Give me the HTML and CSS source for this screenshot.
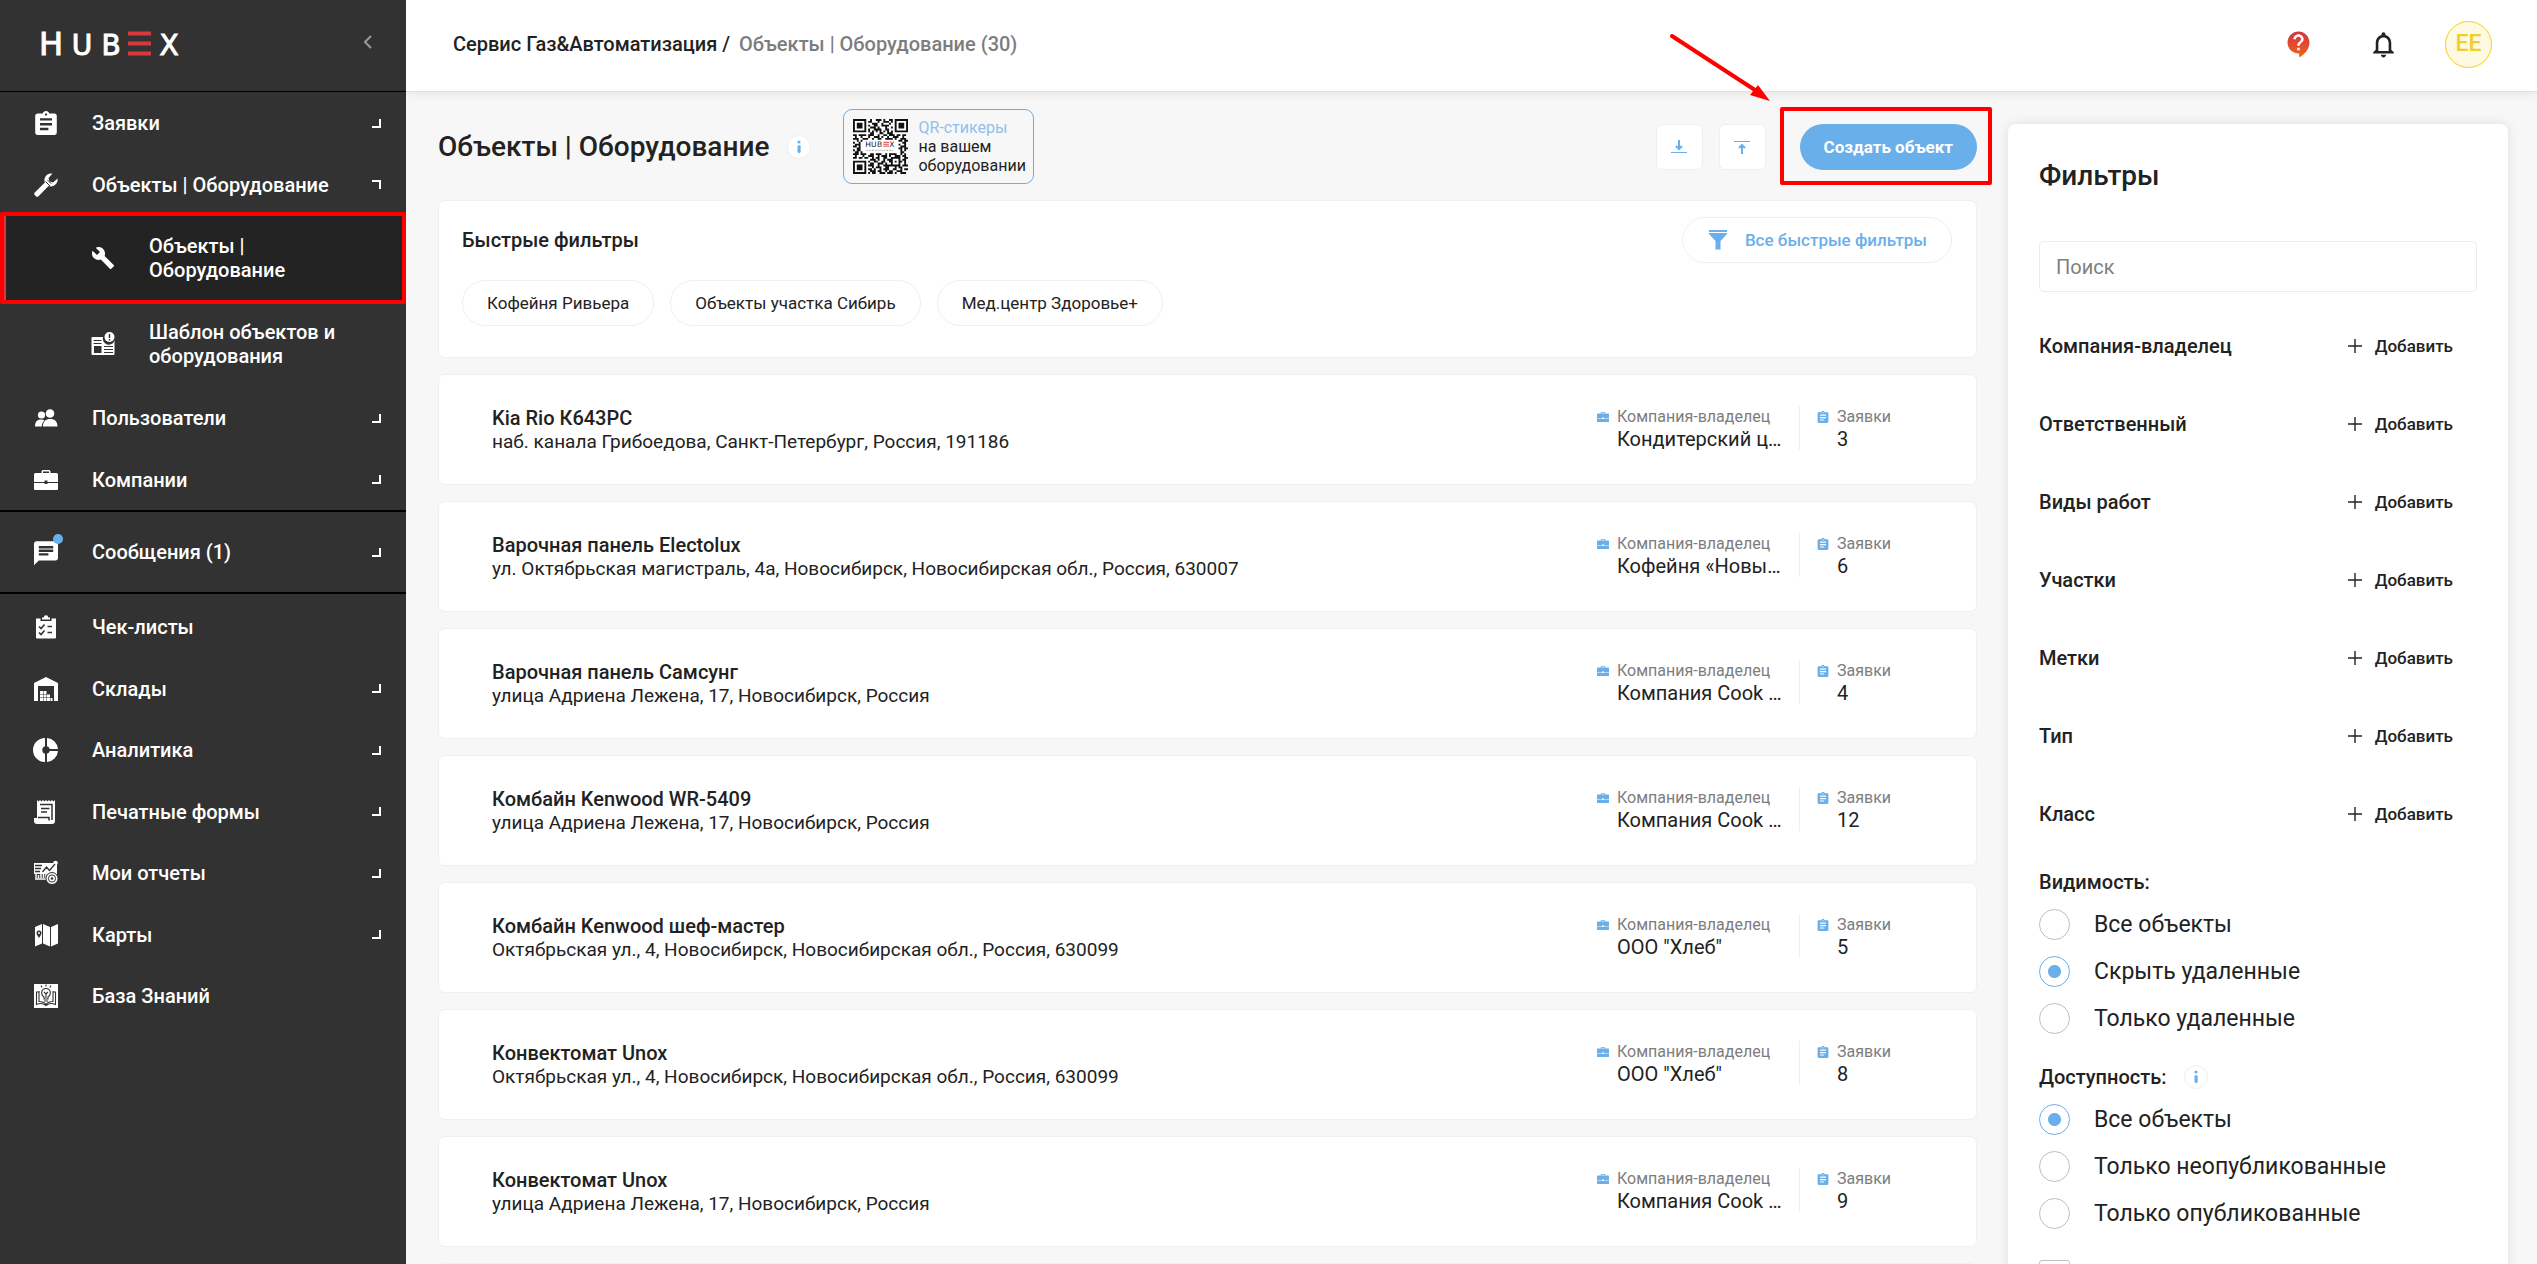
FILE: index.html
```html
<!DOCTYPE html>
<html lang="ru">
<head>
<meta charset="utf-8">
<meta name="viewport" content="width=device-width, initial-scale=1">
<title>HubEx — Объекты | Оборудование</title>
<link rel="stylesheet" href="styles.css">
</head>
<body>
<svg class="sprite" aria-hidden="true">
  <symbol id="i-clipboard" viewBox="2 1 20 20"><path d="M19 3h-4.180C14.400 1.840 13.300 1 12 1c-1.300 0-2.400.840-2.820 2H5c-1.100 0-2 .900-2 2v14c0 1.100.900 2 2 2h14c1.100 0 2-.900 2-2V5c0-1.100-.900-2-2-2zm-7 0c.550 0 1 .450 1 1s-.450 1-1 1-1-.450-1-1 .450-1 1-1zm2 14H7v-2h7v2zm3-4H7v-2h10v2zm0-4H7V7h10v2z"/></symbol>
  <symbol id="i-briefcase" viewBox="0 0 24 24"><path d="M7.500 5V3.500Q7.500 2 9 2h6q1.500 0 1.500 1.500V5H22.500Q24 5 24 6.500V14H13.500v-1.500h-3V14H0V6.500Q0 5 1.500 5zM9 5h6V3.500H9zM0 15h10.500v1h3v-1H24v6q0 1-1 1H1q-1 0-1-1z"/></symbol>
  <symbol id="i-wrench" viewBox="0 0 24 24"><path d="M22.700 19l-9.100-9.100c.900-2.300.400-5-1.500-6.900-2-2-5-2.400-7.400-1.300L9 6 6 9 1.600 4.700C.400 7.100.900 10.100 2.900 12.100c1.900 1.900 4.600 2.400 6.900 1.500l9.100 9.100c.400.400 1 .400 1.400 0l2.300-2.300c.500-.400.500-1.100.100-1.400z"/></symbol>
  <symbol id="i-info" viewBox="0 0 24 24"><circle cx="12" cy="6.500" r="1.700"/><rect x="10.400" y="10" width="3.400" height="8.500" rx="1.200"/></symbol>
  <symbol id="i-plus" viewBox="0 0 14 14"><path d="M7 0v14M0 7h14" fill="none" stroke="currentColor" stroke-width="1.400"/></symbol>
</svg>

<div class="app">
  <aside class="sidebar">
    <div class="brand">
      <svg class="logo" viewBox="0 -10 144 44" role="img" aria-label="HubEx">
        <g class="logo-text">
          <text x="14" y="25" font-size="32">H</text>
          <text x="45" y="25" font-size="28">U</text>
          <text x="74" y="25" font-size="28">B</text>
          <text x="132" y="25" font-size="28">X</text>
        </g>
        <path d="M91 3.500h23M91 13.500h23M91 23.500h23" stroke="#d8393f" stroke-width="4"/>
      </svg>
      <button class="collapse" type="button" aria-label="Свернуть меню">
        <svg width="10" height="14" viewBox="0 0 10 14"><path d="M8 1L2 7l6 6" fill="none" stroke="currentColor" stroke-width="2"/></svg>
      </button>
    </div>
    <nav>
      <ul class="menu">
        <li><a class="item" href="#"><svg class="icon"><use href="#i-clipboard"/></svg><span>Заявки</span><i class="corner"></i></a></li>
        <li>
          <a class="item" href="#">
            <svg class="icon" viewBox="0 0 24 24"><path d="M23.600 5.500l-4.600 4-3.500-1-1-3.500L18.500.600C15 0 11.500 2 10.600 5.500c-.300 1.500-.100 2.700.300 3.900L.800 19.500c-.800.800-.800 1.800 0 2.600l1.100 1.100c.800.800 1.800.800 2.600 0l10-10.100c5 1.800 9.800-2.500 9.100-7.600z"/><path d="M11.500 8.500l4.500 4.500M13.500 7l3.800 3.800" stroke="#323232" stroke-width="1" fill="none"/></svg>
            <span>Объекты | Оборудование</span><i class="corner corner-open"></i></a>
          <ul class="submenu">
            <li><a class="item item-active" href="#" aria-current="page"><svg class="icon"><use href="#i-wrench"/></svg><span>Объекты | Оборудование</span></a></li>
            <li><a class="item" href="#">
              <svg class="icon" viewBox="0 0 24 24"><path d="M1.500 5H12a6 6 0 0 0 11.500 3.500V22q0 1-1 1h-21q-1 0-1-1V6q0-1 1-1z"/><g stroke="#323232" stroke-width="1.200" fill="none"><path d="M2.500 8.500h8M2.500 11.500h8M13 14.500h9M13 17.500h9M13 20.500h9"/><rect x="3" y="14" width="7.500" height="7" stroke="none" fill="#323232"/></g><circle cx="18.500" cy="5" r="5"/><path d="M18.500 2v4M18.500 7v1.500" stroke="#323232" stroke-width="1.400"/></svg>
              <span>Шаблон объектов и оборудования</span></a></li>
          </ul>
        </li>
        <li><a class="item" href="#">
          <svg class="icon" viewBox="0 0 24 24"><circle cx="7.500" cy="9" r="3.600"/><circle cx="16" cy="7.500" r="4.300"/><path d="M1 20.500c0-4.500 2-7 6-7 1.600 0 2.600.300 3.400 1-1.700 1.500-2.600 3.500-2.600 6zM9 20.500c0-5 2.500-7.500 7.200-7.500s7.300 2.500 7.300 7.500z"/></svg>
          <span>Пользователи</span><i class="corner"></i></a></li>
        <li><a class="item" href="#"><svg class="icon"><use href="#i-briefcase"/></svg><span>Компании</span><i class="corner"></i></a></li>
      </ul>
      <ul class="menu menu-messages">
        <li><a class="item" href="#">
          <span class="icon-badge"><svg class="icon" viewBox="2 1 20 20"><path d="M20 2H4c-1.100 0-1.990.900-1.990 2L2 22l4-4h14c1.100 0 2-.900 2-2V4c0-1.100-.900-2-2-2zM6 9h12v2H6V9zm8 5H6v-2h8v2zm4-6H6V6h12v2z"/></svg></span>
          <span>Сообщения (1)</span><i class="corner"></i></a></li>
      </ul>
      <ul class="menu">
        <li><a class="item" href="#">
          <svg class="icon" viewBox="0 0 24 24"><path d="M2 3.500h4.500V6h11V3.500H22V22.500q0 1-1 1H3q-1 0-1-1zM8 2.500h1.800a2.200 2.200 0 0 1 4.400 0H16v2H8z"/><path d="M5 11.500l2 2 3.500-4M5 17.500l2 2 3.500-4M13.500 11.500H18M13.500 17.500H18" stroke="#323232" stroke-width="1.600" fill="none"/></svg>
          <span>Чек-листы</span></a></li>
        <li><a class="item" href="#">
          <svg class="icon" viewBox="0 0 24 24"><path d="M0 6L12 0l12 6v18h-4V9H4v15H0z"/><path d="M6 14h3v3H6zM6 17.500h3v3H6zM6 21h3v3H6zM9.500 14h3v3h-3zM9.500 17.500h3v3h-3zM9.500 21h3v3h-3zM13 17.500h3v3h-3zM13 21h3v3h-3zM16.500 21h2v3h-2z"/></svg>
          <span>Склады</span><i class="corner"></i></a></li>
        <li><a class="item" href="#">
          <svg class="icon" viewBox="0 0 24 24"><path d="M11 0v8.200a4 4 0 0 0 0 7.600V24A12 12 0 0 1 11 0zM13 0a12 12 0 0 1 11 11h-8.200A4 4 0 0 0 13 8.200zM24 13a12 12 0 0 1-11 11v-8.200a4 4 0 0 0 2.800-2.800z"/></svg>
          <span>Аналитика</span><i class="corner"></i></a></li>
        <li><a class="item" href="#">
          <svg class="icon" viewBox="0 0 24 24"><path d="M3 0l1.500 1.500L6 0l1.500 1.500L9 0l1.500 1.500L12 0l1.500 1.500L15 0l1.500 1.500L18 0l1.500 1.500L21 0v21q0 3-3 3H3q-3 0-3-3v-3h3z"/><path d="M6 4.500h12V20M7 8.500h8.500M7 12h6M4 17.500h11v3" stroke="#323232" stroke-width="1.500" fill="none"/></svg>
          <span>Печатные формы</span><i class="corner"></i></a></li>
        <li><a class="item" href="#">
          <svg class="icon" viewBox="0 0 24 24"><path d="M0 2h23v11H0z"/><circle cx="21.500" cy="2" r="2.300"/><path d="M1 4.500h7M1 7.500h6M1 10.500h5M8.500 11l4-5 3 3.500L21 3" stroke="#323232" stroke-width="1.300" fill="none"/><path d="M1 18h12M2 17v-4M4.500 17v-3M7 17v-5M9.500 17v-6M12 17v-5" stroke="currentColor" stroke-width="1.500"/><circle cx="18" cy="17.500" r="6" stroke="#323232"/><circle cx="18" cy="17.500" r="3.600" stroke="#323232" fill="none"/><circle cx="18" cy="17.500" r="1.300" fill="#323232"/></svg>
          <span>Мои отчеты</span><i class="corner"></i></a></li>
        <li><a class="item" href="#">
          <svg class="icon" viewBox="0 0 24 24"><path d="M1 4l7-3v19.500l-7 3zM9 1l7 3v19.500l-7-3zM17 4l7-3v19.500l-7 3z"/><path d="M5 15c-2-3-2.500-4-2.500-5a2.500 2.500 0 0 1 5 0c0 1-.500 2-2.500 5z" fill="#323232"/><circle cx="5" cy="10" r="1"/></svg>
          <span>Карты</span><i class="corner"></i></a></li>
        <li><a class="item" href="#">
          <svg class="icon" viewBox="0 0 24 24"><path d="M0 0h24v24H0z"/><g stroke="#323232" stroke-width="1.100" fill="none"><path d="M5 8H2.500v12.500C6 19 9.500 19.500 12 21.500c2.500-2 6-2.500 9.500-1V8H19M5 7v10.500c3 0 5.500 1 7 3 1.500-2 4-3 7-3V7"/><path d="M10 15v-2c-4-3-2.500-8.500 2-8.500s6 5.500 2 8.500v2zM10 17h4M12 14V9M10 8l2 2 2-2M12 .500v2M7 1.500l1 2M17 1.500l-1 2"/></g></svg>
          <span>База Знаний</span></a></li>
      </ul>
    </nav>
  </aside>

  <div class="page">
    <header class="topbar">
      <p class="crumbs"><a href="#">Сервис Газ&amp;Автоматизация</a> / <span>Объекты | Оборудование (30)</span></p>
      <div class="top-actions">
        <button type="button" aria-label="Помощь">
          <svg width="31" height="31" viewBox="0 0 24 24"><defs><linearGradient id="help-fill" x1="0" y1="0" x2="0" y2="1"><stop offset="0" stop-color="#d6323f"/><stop offset="1" stop-color="#e9671e"/></linearGradient></defs><path fill="url(#help-fill)" d="M12 2C7.310 2 3.500 5.810 3.500 10.500S7.310 19 12 19h.500v3c4.860-2.340 8-7 8-11.500C20.500 5.810 16.690 2 12 2zm1 14.500h-2v-2h2v2zm0-3.500h-2c0-3.250 3-3 3-5 0-1.100-.900-2-2-2s-2 .900-2 2h-2c0-2.210 1.790-4 4-4s4 1.790 4 4c0 2.500-3 2.750-3 5z"/></svg>
        </button>
        <button type="button" aria-label="Уведомления">
          <svg width="31" height="31" viewBox="0 0 24 24"><path d="M12 22c1.100 0 2-.900 2-2h-4c0 1.100.890 2 2 2zm6-6v-5c0-3.070-1.640-5.640-4.500-6.320V4c0-.830-.670-1.500-1.500-1.500s-1.500.670-1.500 1.500v.680C7.630 5.360 6 7.920 6 11v5l-2 2v1h16v-1l-2-2zm-2 1H8v-6c0-2.480 1.510-4.500 4-4.500s4 2.020 4 4.500v6z"/></svg>
        </button>
        <button class="avatar" type="button">ЕЕ</button>
      </div>
    </header>

    <div class="content">
      <main class="objects">
        <div class="heading">
          <h1>Объекты | Оборудование</h1>
          <svg class="info"><use href="#i-info"/></svg>
          <a class="qr-link" href="#">
            <svg class="qr" viewBox="0 0 29 29" aria-hidden="true">
              <g fill="none" stroke="#111"><path d="M.500.500h6v6h-6zM22.500.500h6v6h-6zM.500 22.500h6v6h-6z"/></g>
              <path fill="#111" d="M2 2h3v3H2zM24 2h3v3h-3zM2 24h3v3H2z"/>
              <path stroke="#111" fill="none" d="M9 .500h1m2 0h3m1 0h1m2 0h2M8 1.500h2m3 0h1m2 0h3m1 0h1M10 2.500h3m2 0h1m3 0h1M8 3.500h1m2 0h2m2 0h4M9 4.500h3m1 0h1m3 0h1m2 0h1M8 5.500h1m2 0h4m2 0h2M8 6.500h1m1 0h1m1 0h1m1 0h1m1 0h1m1 0h1m1 0h1M9 7.500h2m3 0h2m2 0h3M0 8.500h2m1 0h4m1 0h3m2 0h1m2 0h2m1 0h3m1 0h2m1 0h2M1 9.500h1m2 0h1m3 0h1m2 0h3m1 0h1m2 0h1m2 0h3m2 0h1M0 10.500h3m2 0h3m2 0h1m2 0h2m2 0h4m1 0h1m2 0h3M2 11.500h1m1 0h1m19 0h2m1 0h2M0 12.500h1m2 0h1m22 0h2M1 13.500h3m20 0h1m2 0h1M0 14.500h2m1 0h1m21 0h3M2 15.500h2m20 0h2m1 0h2M0 16.500h1m1 0h2m21 0h1m1 0h1M1 17.500h2m1 0h1m20 0h2M0 18.500h3m1 0h3m2 0h2m1 0h3m2 0h1m1 0h4m2 0h1m1 0h1M1 19.500h1m3 0h1m2 0h3m2 0h1m1 0h3m1 0h1m2 0h3m1 0h2M0 20.500h2m1 0h2m1 0h2m2 0h1m1 0h2m2 0h2m2 0h5m2 0h2M9 21.500h3m1 0h1m2 0h1m1 0h3m3 0h1m1 0h2M8 22.500h1m2 0h2m2 0h2m2 0h2m1 0h1m1 0h2m1 0h1M9 23.500h2m2 0h3m1 0h1m2 0h1m3 0h1m2 0h1M8 24.500h3m2 0h1m2 0h9m1 0h3M10 25.500h1m1 0h3m2 0h2m3 0h1m1 0h2M8 26.500h2m1 0h1m2 0h1m1 0h3m2 0h2m2 0h1m1 0h2M9 27.500h3m1 0h2m2 0h1m1 0h2m2 0h3M8 28.500h1m1 0h2m2 0h3m1 0h3m1 0h1m2 0h3"/>
              <g class="logo-mini"><text x="8" y="14.500">H</text><text x="11" y="14.500">U</text><text x="14" y="14.500">B</text><text x="20.500" y="14.500">X</text></g>
              <path d="M16 12.300h3M16 13.300h3M16 14.300h3" stroke="#d8393f" stroke-width=".500"/>
              <path d="M7 16.500h14" stroke="#aaa" stroke-width=".500" stroke-dasharray="1 .500"/>
            </svg>
            <span><em>QR-стикеры</em><br>на вашем<br>оборудовании</span>
          </a>
          <div class="heading-actions">
            <button class="square" type="button" aria-label="Импорт"><svg width="16" height="16" viewBox="0 0 16 16"><path d="M8 1v9M5 7l3 3 3-3"/><path d="M0 13.500h16" stroke-width="1"/></svg></button>
            <button class="square" type="button" aria-label="Экспорт"><svg width="16" height="16" viewBox="0 0 16 16"><path d="M8 15V6M5 9l3-3 3 3"/><path d="M0 2.500h16" stroke-width="1"/></svg></button>
            <div class="callout">
              <button class="create" type="button">Создать объект</button>
              <svg class="arrow" width="100" height="68" viewBox="0 0 100 68" aria-hidden="true"><path d="M2 2l86 56" stroke="#f00" stroke-width="4" stroke-linecap="round"/><path d="M100 67L80 61l8-10z" fill="#f00"/></svg>
            </div>
          </div>
        </div>

        <section class="card quick">
          <div class="quick-head">
            <h2>Быстрые фильтры</h2>
            <button class="pill all-filters" type="button"><svg width="18" height="20" viewBox="0 0 18 20"><path d="M0 0h18v2H0zM0 3h18v1l-6.500 7v8.500h-5V11L0 4z"/></svg>Все быстрые фильтры</button>
          </div>
          <div class="chips">
            <button class="pill" type="button">Кофейня Ривьера</button>
            <button class="pill" type="button">Объекты участка Сибирь</button>
            <button class="pill" type="button">Мед.центр Здоровье+</button>
          </div>
        </section>

        <ul class="list">
          <li class="card object">
            <div><h3>Kia Rio К643РС</h3><p>наб. канала Грибоедова, Санкт-Петербург, Россия, 191186</p></div>
            <dl class="fact"><dt><svg><use href="#i-briefcase"/></svg>Компания-владелец</dt><dd>Кондитерский ц…</dd></dl>
            <dl class="fact"><dt><svg><use href="#i-clipboard"/></svg>Заявки</dt><dd>3</dd></dl>
          </li>
          <li class="card object">
            <div><h3>Варочная панель Electolux</h3><p>ул. Октябрьская магистраль, 4а, Новосибирск, Новосибирская обл., Россия, 630007</p></div>
            <dl class="fact"><dt><svg><use href="#i-briefcase"/></svg>Компания-владелец</dt><dd>Кофейня «Новы…</dd></dl>
            <dl class="fact"><dt><svg><use href="#i-clipboard"/></svg>Заявки</dt><dd>6</dd></dl>
          </li>
          <li class="card object">
            <div><h3>Варочная панель Самсунг</h3><p>улица Адриена Лежена, 17, Новосибирск, Россия</p></div>
            <dl class="fact"><dt><svg><use href="#i-briefcase"/></svg>Компания-владелец</dt><dd>Компания Cook …</dd></dl>
            <dl class="fact"><dt><svg><use href="#i-clipboard"/></svg>Заявки</dt><dd>4</dd></dl>
          </li>
          <li class="card object">
            <div><h3>Комбайн Kenwood WR-5409</h3><p>улица Адриена Лежена, 17, Новосибирск, Россия</p></div>
            <dl class="fact"><dt><svg><use href="#i-briefcase"/></svg>Компания-владелец</dt><dd>Компания Cook …</dd></dl>
            <dl class="fact"><dt><svg><use href="#i-clipboard"/></svg>Заявки</dt><dd>12</dd></dl>
          </li>
          <li class="card object">
            <div><h3>Комбайн Kenwood шеф-мастер</h3><p>Октябрьская ул., 4, Новосибирск, Новосибирская обл., Россия, 630099</p></div>
            <dl class="fact"><dt><svg><use href="#i-briefcase"/></svg>Компания-владелец</dt><dd>ООО "Хлеб"</dd></dl>
            <dl class="fact"><dt><svg><use href="#i-clipboard"/></svg>Заявки</dt><dd>5</dd></dl>
          </li>
          <li class="card object">
            <div><h3>Конвектомат Unox</h3><p>Октябрьская ул., 4, Новосибирск, Новосибирская обл., Россия, 630099</p></div>
            <dl class="fact"><dt><svg><use href="#i-briefcase"/></svg>Компания-владелец</dt><dd>ООО "Хлеб"</dd></dl>
            <dl class="fact"><dt><svg><use href="#i-clipboard"/></svg>Заявки</dt><dd>8</dd></dl>
          </li>
          <li class="card object">
            <div><h3>Конвектомат Unox</h3><p>улица Адриена Лежена, 17, Новосибирск, Россия</p></div>
            <dl class="fact"><dt><svg><use href="#i-briefcase"/></svg>Компания-владелец</dt><dd>Компания Cook …</dd></dl>
            <dl class="fact"><dt><svg><use href="#i-clipboard"/></svg>Заявки</dt><dd>9</dd></dl>
          </li>
          <li class="card object" aria-hidden="true"></li>
        </ul>
      </main>

      <aside class="filters">
        <h2>Фильтры</h2>
        <input class="search" type="text" placeholder="Поиск" aria-label="Поиск">
        <ul class="filter-rows">
          <li><h3>Компания-владелец</h3><button type="button"><svg><use href="#i-plus"/></svg>Добавить</button></li>
          <li><h3>Ответственный</h3><button type="button"><svg><use href="#i-plus"/></svg>Добавить</button></li>
          <li><h3>Виды работ</h3><button type="button"><svg><use href="#i-plus"/></svg>Добавить</button></li>
          <li><h3>Участки</h3><button type="button"><svg><use href="#i-plus"/></svg>Добавить</button></li>
          <li><h3>Метки</h3><button type="button"><svg><use href="#i-plus"/></svg>Добавить</button></li>
          <li><h3>Тип</h3><button type="button"><svg><use href="#i-plus"/></svg>Добавить</button></li>
          <li><h3>Класс</h3><button type="button"><svg><use href="#i-plus"/></svg>Добавить</button></li>
        </ul>
        <fieldset>
          <legend>Видимость:</legend>
          <label><input type="radio" name="visibility">Все объекты</label>
          <label><input type="radio" name="visibility" checked>Скрыть удаленные</label>
          <label><input type="radio" name="visibility">Только удаленные</label>
        </fieldset>
        <fieldset>
          <legend>Доступность: <svg class="info"><use href="#i-info"/></svg></legend>
          <label><input type="radio" name="access" checked>Все объекты</label>
          <label><input type="radio" name="access">Только неопубликованные</label>
          <label><input type="radio" name="access">Только опубликованные</label>
        </fieldset>
        <input class="check" type="checkbox" aria-label="Дополнительный фильтр">
      </aside>
    </div>
  </div>
</div>
</body>
</html>
```
FILE: styles.css
```css
:root {
  --blue: #69b0eb;
  --ink: #222;
  --muted: #7d7d7d;
  --line: #efefef;
  --dark: #323232;
}

* { box-sizing: border-box; margin: 0; padding: 0; }

body {
  font: 400 20px/24px Roboto, "Noto Sans", sans-serif;
  color: var(--ink);
  background: #f7f7f7;
}

ul { list-style: none; }
a { color: inherit; text-decoration: none; }
button { font: inherit; color: inherit; background: none; border: 0; cursor: pointer; }
h1, h2, h3 { font-size: 20px; font-weight: 500; }
svg { display: block; fill: currentColor; flex: none; overflow: visible; }
.sprite { position: absolute; width: 0; height: 0; overflow: hidden; }

.app { display: grid; grid-template-columns: 406px minmax(0, 1fr); height: 100vh; overflow: hidden; }

/* Sidebar */
.sidebar { background: var(--dark); color: #fff; font-weight: 500; overflow: hidden; }
.brand {
  display: flex; align-items: center; justify-content: space-between;
  height: 92px; padding: 0 33px 8px 37px; border-bottom: 1px solid #000;
}
.logo { width: 144px; height: 44px; }
.logo-text { font-family: "DejaVu Sans", sans-serif; font-weight: 400; fill: #fff; stroke: #fff; stroke-width: 1; text-anchor: middle; }
.collapse { color: #999; }
.item { display: flex; align-items: center; gap: 34px; min-height: 61px; padding: 0 25px 0 34px; }
.item > span:not(.icon-badge) { flex: 1; }
.menu > li:nth-child(odd) > .item { min-height: 62px; }
.icon { width: 24px; height: 24px; }
.corner { width: 9px; height: 9px; border: solid #fff; border-width: 0 2px 2px 0; }
.corner-open { border-width: 2px 2px 0 0; }
.submenu .item { min-height: 86px; padding-left: 91px; }
.submenu .item-active { position: relative; background: #232323; }
.item-active::after {
  content: ""; position: absolute; inset: -3px 0;
  border: 4px solid #f00; border-radius: 2px; box-shadow: inset 2px 0 #d8393f;
}
.menu-messages { border: solid #000; border-width: 2px 0; padding: 9px 0; margin-bottom: 2px; }
.icon-badge { position: relative; }
.icon-badge::after {
  content: ""; position: absolute; top: -6px; right: -5px;
  width: 10px; height: 10px; border-radius: 50%; background: var(--blue);
}

/* Top bar */
.page { display: flex; flex-direction: column; min-width: 0; overflow: hidden; }
.topbar {
  position: relative; z-index: 1; flex: none;
  display: flex; align-items: center; justify-content: space-between;
  height: 92px; padding: 0 45px 3px 47px; background: #fff;
  border-bottom: 1px solid #e0e0e0; box-shadow: 0 2px 10px rgba(0, 0, 0, .08);
}
.crumbs { font-weight: 500; }
.crumbs span { margin-left: 4px; color: var(--muted); }
.top-actions { display: flex; align-items: center; gap: 38px; }
.top-actions button { display: grid; place-items: center; width: 47px; height: 47px; }
.top-actions .avatar {
  border: 1px solid #f0cf2b; border-radius: 50%; background: #fef9e3;
  color: #f0cf2b; font-size: 23px; font-weight: 500;
}

/* Content */
.content {
  display: grid; grid-template-columns: minmax(0, 1fr) 500px; gap: 31px;
  flex: 1; min-height: 0; padding: 17px 29px 0 32px;
}
.objects, .list { display: flex; flex-direction: column; gap: 16px; }
.heading { display: flex; align-items: center; }
.heading h1 { font-size: 28px; line-height: 36px; }
.info { width: 24px; height: 24px; border: 1px solid var(--line); border-radius: 50%; background: #fff; color: var(--blue); }
.heading .info { margin: 0 32px 0 18px; }
.qr-link {
  display: flex; align-items: center; gap: 10px; height: 75px; padding: 0 7px 0 9px;
  border: 1px solid var(--blue); border-radius: 9px; font-size: 16px; line-height: 19px;
}
.qr-link em { font-style: normal; color: #8fc0ee; }
.qr { width: 55px; height: 55px; background: #fff; }
.logo-mini { font: 500 4px "DejaVu Sans", sans-serif; text-anchor: middle; }
.heading-actions { display: flex; align-items: center; gap: 16px; margin-left: auto; }
.square {
  display: grid; place-items: center; width: 47px; height: 46px;
  background: #fff; border: 1px solid var(--line); border-radius: 6px; color: var(--blue);
}
.square svg { fill: none; stroke: currentColor; stroke-width: 2; }
.callout { position: relative; margin-left: 18px; }
.create {
  height: 46px; padding: 0 24px; border-radius: 23px;
  background: var(--blue); color: #fff; font-size: 17px; font-weight: 700;
}
.callout::before {
  content: ""; position: absolute; inset: -17px -15px -15px -20px;
  border: 4px solid #f00; border-radius: 2px; pointer-events: none;
}
.arrow { position: absolute; right: 207px; bottom: 68px; z-index: 2; }

.card { background: #fff; border: 1px solid var(--line); border-radius: 7px; }
.quick { padding: 16px 24px 31px 23px; display: grid; gap: 17px; }
.quick-head { display: flex; align-items: center; justify-content: space-between; }
.pill { height: 46px; padding: 0 24px; border: 1px solid var(--line); border-radius: 23px; font-size: 17px; }
.all-filters { display: flex; align-items: center; gap: 18px; padding-left: 26px; color: var(--blue); font-weight: 500; }
.chips { display: flex; gap: 16px; }

.object { display: grid; grid-template-columns: minmax(0, 1fr) 202px 177px; min-height: 111px; padding: 31px 0 31px 53px; }
.object p { font-size: 19px; line-height: 23px; }
.fact { line-height: 22px; }
.fact + .fact { height: 44px; padding-left: 17px; border-left: 1px solid var(--line); }
.fact dt { display: flex; align-items: center; gap: 8px; font-size: 16px; color: var(--muted); }
.fact svg { width: 12px; height: 12px; color: var(--blue); }
.fact dd { margin-left: 20px; white-space: nowrap; }

/* Filters */
.filters {
  margin-top: 15px; padding: 36px 31px 0; background: #fff;
  border-radius: 8px 8px 0 0; box-shadow: 0 0 12px rgba(0, 0, 0, .1);
}
.filters h2 { font-size: 28px; line-height: 32px; }
.search {
  width: 100%; height: 51px; margin: 49px 0 15px; padding: 0 16px;
  border: 1px solid #ececec; border-radius: 5px; font: inherit; color: inherit; outline: 0;
}
.search::placeholder { color: #808080; }
.filter-rows li { display: flex; align-items: center; justify-content: space-between; height: 78px; }
.filter-rows button { display: flex; align-items: center; gap: 13px; padding-right: 24px; font-size: 17px; font-weight: 500; }
.filter-rows svg { width: 14px; height: 14px; }
.filters fieldset { border: 0; margin-top: 17px; }
.filters fieldset + fieldset { margin-top: 23px; }
.filters legend { display: flex; align-items: center; gap: 18px; margin-bottom: 7px; font-weight: 500; }
.filters label { display: flex; align-items: center; gap: 24px; height: 47px; font-size: 23px; }
input[type="radio"], .check {
  appearance: none; flex: none; width: 31px; height: 31px;
  border: 1px solid #bfbfbf; border-radius: 50%; background: #fff;
}
input[type="radio"]:checked {
  border-color: var(--blue);
  background: radial-gradient(circle, var(--blue) 6px, #fff 7px);
}
.check { border-radius: 3px; margin-top: 23px; }
```
